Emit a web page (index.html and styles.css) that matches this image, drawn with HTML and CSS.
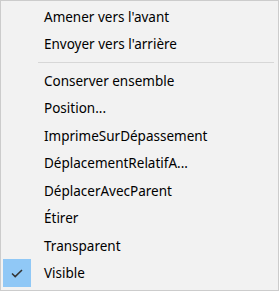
FILE: index.html
```html
<!DOCTYPE html>
<html lang="fr">
<head>
<meta charset="utf-8">
<link rel="stylesheet" href="styles.css">
</head>
<body>
<div class="menu">
  <div class="item"><span class="gutter"></span><span class="label">Amener vers l'avant</span></div>
  <div class="item"><span class="gutter"></span><span class="label">Envoyer vers l'arrière</span></div>
  <div class="sep"></div>
  <div class="item"><span class="gutter"></span><span class="label">Conserver ensemble</span></div>
  <div class="item"><span class="gutter"></span><span class="label">Position...</span></div>
  <div class="item"><span class="gutter"></span><span class="label">ImprimeSurDépassement</span></div>
  <div class="item"><span class="gutter"></span><span class="label">DéplacementRelatifA...</span></div>
  <div class="item"><span class="gutter"></span><span class="label">DéplacerAvecParent</span></div>
  <div class="item"><span class="gutter"></span><span class="label">Étirer</span></div>
  <div class="item"><span class="gutter"></span><span class="label">Transparent</span></div>
  <div class="item"><span class="gutter checked"><svg width="12" height="9" viewBox="0 0 12 9"><path d="M1 4.5 L4.2 7.6 L11 1" fill="none" stroke="#333" stroke-width="1.5"/></svg></span><span class="label">Visible</span></div>
</div>
</body>
</html>
```
FILE: styles.css
```css
html, body {
  margin: 0;
  padding: 0;
  background: #f2f2f2;
}
.menu {
  box-sizing: border-box;
  width: 279px;
  height: 291px;
  border: 1px solid #cccccc;
  background: #f2f2f2;
  padding: 2px 2px 3px 2px;
  display: flex;
  flex-direction: column;
  font-family: "Noto Sans", "Open Sans", sans-serif;
  font-size: 13.5px;
  color: #000;
}
.item {
  height: 27.5px;
  display: flex;
  align-items: center;
}
.gutter {
  width: 28px;
  height: 28px;
  margin-right: 13px;
  display: flex;
  align-items: center;
  justify-content: center;
  flex: none;
}
.gutter.checked {
  background: #90c8f6;
}
.label {
  white-space: nowrap;
}
.sep {
  height: 1px;
  background: #d7d7d7;
  margin: 4px 2px 4px 35px;
}
```
